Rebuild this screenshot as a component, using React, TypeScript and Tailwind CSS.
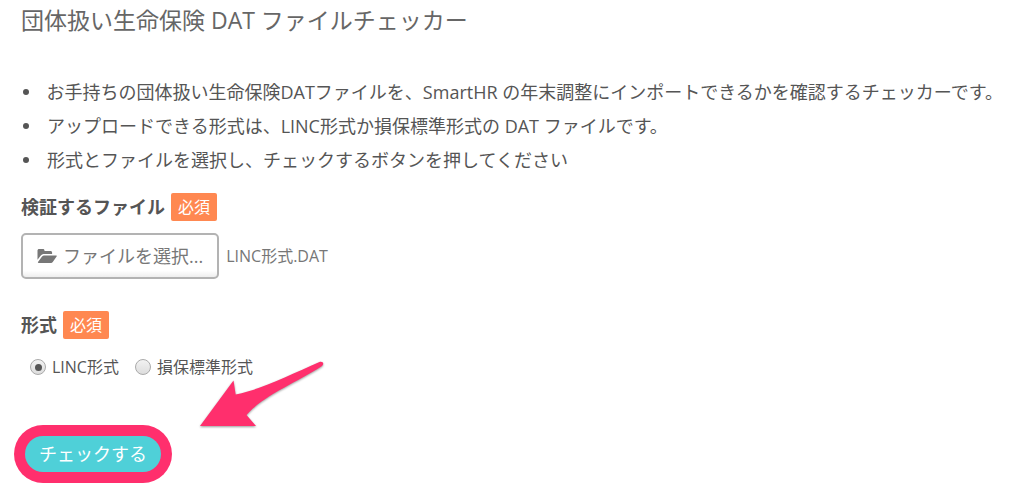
import { useRef, useState } from "react";

const notes = [
  "お手持ちの団体扱い生命保険DATファイルを、SmartHR の年末調整にインポートできるかを確認するチェッカーです。",
  "アップロードできる形式は、LINC形式か損保標準形式の DAT ファイルです。",
  "形式とファイルを選択し、チェックするボタンを押してください",
];

const formats = ["LINC形式", "損保標準形式"];

function Required() {
  return (
    <span className="rounded-xs bg-[#ff8851] px-[7px] text-base leading-7 font-normal text-white">
      必須
    </span>
  );
}

function FolderOpenIcon() {
  return (
    <svg viewBox="0 0 20 16" className="h-4 w-5 shrink-0 fill-current" aria-hidden="true">
      <path d="M0.5 11.8V2.6C0.5 1.6 1.2 1 2.1 1H6c.9 0 1.5.6 1.500 1.500V3h6c.9 0 1.600.7 1.600 1.600V6H7.200c-1.500 0-2.700.6-3.600 1.700z" />
      <path d="M1 14.100 4.700 8.900C5.400 7.900 6.300 7.400 7.400 7.400H19c.7 0 1 .5.6 1.100l-3.500 4.900c-.7 1-1.600 1.500-2.700 1.500H1.600c-.7 0-.9-.3-.6-.8z" />
    </svg>
  );
}

function Arrow() {
  return (
    <svg
      viewBox="0 0 130 72"
      className="pointer-events-none absolute bottom-10 left-[176px] h-[72px] w-[130px] fill-[#ff2f6d] drop-shadow-[0_1px_1px_rgba(0,0,0,0.4)]"
      aria-hidden="true"
    >
      <path d="M3 66 36.500 20.500 38.700 34.500C65 29 95 14 122.500 2C126 1 127.500 4 125 6C99 23 67 35 49.500 55L59 66Z" />
    </svg>
  );
}

export default function App() {
  const fileInput = useRef<HTMLInputElement>(null);
  const [fileName, setFileName] = useState("LINC形式.DAT");
  const [format, setFormat] = useState(formats[0]);

  return (
    <main className="px-[21px] pt-1 pb-4 font-['Open_Sans','Noto_Sans_CJK_JP',sans-serif] text-lg text-[#555]">
      <h1 className="text-[23px] leading-8 text-[#666]">団体扱い生命保険 DAT ファイルチェッカー</h1>

      <ul className="mt-[39px] leading-[34px] whitespace-nowrap">
        {notes.map((note) => (
          <li
            key={note}
            className="flex items-center gap-[18px] pl-[2px] before:size-[6px] before:rounded-full before:bg-[#555]"
          >
            {note}
          </li>
        ))}
      </ul>

      <form onSubmit={(event) => event.preventDefault()}>
        <div className="mt-4 flex items-center gap-[6px] font-bold leading-7">
          <label htmlFor="dat-file">検証するファイル</label>
          <Required />
        </div>
        <div className="mt-3 flex items-center gap-[7px]">
          <button
            type="button"
            onClick={() => fileInput.current?.click()}
            className="flex h-[46px] items-center gap-[6px] rounded-[5px] border-2 border-[#b3b3b3] bg-linear-to-b from-white from-85% to-[#eee] px-[14px] text-[#777]"
          >
            <FolderOpenIcon />
            ファイルを選択...
          </button>
          <input
            ref={fileInput}
            id="dat-file"
            type="file"
            accept=".dat"
            className="hidden"
            onChange={(event) => setFileName(event.target.files?.[0]?.name ?? fileName)}
          />
          <span className="text-base text-[#777]">{fileName}</span>
        </div>

        <fieldset className="mt-8">
          <legend className="flex items-center gap-[6px] font-bold leading-7">
            形式
            <Required />
          </legend>
          <div className="mt-[14px] flex gap-4 pl-[9px] text-base leading-7">
            {formats.map((name) => (
              <label key={name} className="flex items-center gap-[6px]">
                <input
                  type="radio"
                  name="format"
                  checked={format === name}
                  onChange={() => setFormat(name)}
                  className="flex size-4 appearance-none items-center justify-center rounded-full border border-[#aaa] bg-linear-to-b from-[#f2f2f2] to-[#ddd] before:size-[7px] before:rounded-full checked:before:bg-[#555]"
                />
                {name}
              </label>
            ))}
          </div>
        </fieldset>

        <div className="relative mt-[55px] pl-1">
          <button
            type="submit"
            className="rounded-full bg-[#4fd0d8] px-[14px] leading-9 text-white ring-[11px] ring-[#ff2f6d]"
          >
            チェックする
          </button>
          <Arrow />
        </div>
      </form>
    </main>
  );
}
